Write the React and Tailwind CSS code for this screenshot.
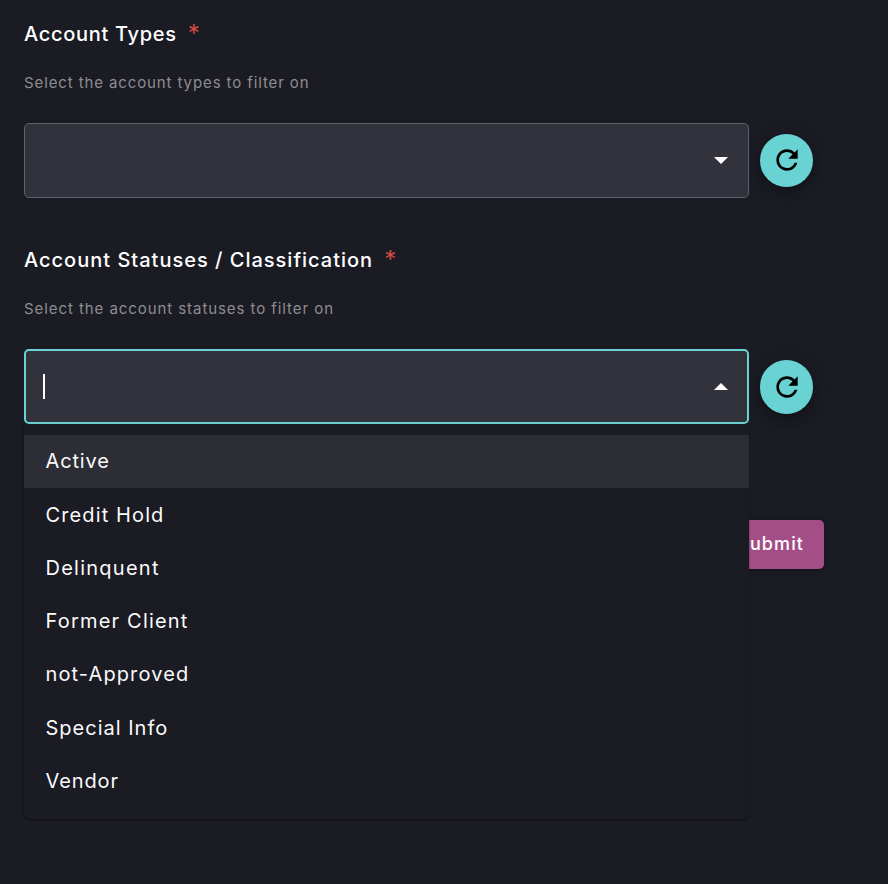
import React from 'react';

const OPTIONS = [
  { label: 'Active', tracking: 'tracking-[0.85px]' },
  { label: 'Credit Hold', tracking: 'tracking-[1.12px]' },
  { label: 'Delinquent', tracking: 'tracking-[1.25px]' },
  { label: 'Former Client', tracking: 'tracking-[1.2px]' },
  { label: 'not-Approved', tracking: 'tracking-[1.12px]' },
  { label: 'Special Info', tracking: 'tracking-[1px]' },
  { label: 'Vendor', tracking: 'tracking-[0.9px]' },
];

function Label({ children, tracking }) {
  return (
    <div className="flex h-7 items-center gap-[11px] whitespace-nowrap text-[20px] leading-7 font-medium text-white">
      <span className={tracking}>{children}</span>
      <span className="text-[24px] font-normal text-[#d1493f]">*</span>
    </div>
  );
}

function Hint({ children, tracking }) {
  return (
    <p className={`mt-[25px] h-5 whitespace-nowrap text-[15px] leading-5 text-[#8d8d91] ${tracking}`}>
      {children}
    </p>
  );
}

function RefreshButton({ className = '' }) {
  return (
    <button
      className={`flex size-[53.33px] shrink-0 items-center justify-center rounded-full bg-[#69d2d3] text-black shadow-[0_4px_7px_-1px_rgba(0,0,0,0.2),0_6px_10px_rgba(0,0,0,0.12),0_1px_20px_rgba(0,0,0,0.08)] ${className}`}
    >
      <svg viewBox="0 0 24 24" className="size-8" fill="currentColor">
        <path d="M17.65 6.35C16.2 4.9 14.21 4 12 4c-4.42 0-7.99 3.58-7.99 8s3.57 8 7.99 8c3.73 0 6.84-2.55 7.73-6h-2.08c-.82 2.33-3.04 4-5.65 4-3.31 0-6-2.69-6-6s2.69-6 6-6c1.66 0 3.14.69 4.22 1.78L13 11h7V4l-2.35 2.35z" />
      </svg>
    </button>
  );
}

function Arrow({ up }) {
  return (
    <svg viewBox="0 0 14 7" className="h-[7px] w-[14px]" fill="white">
      <path d={up ? 'M0 7 7 0l7 7z' : 'M0 0l7 7 7-7z'} />
    </svg>
  );
}

export default function App() {
  return (
    <main className="h-[884px] w-[888px] overflow-hidden bg-[#1b1b24] pt-5 pl-6 font-[Inter,sans-serif]">
      <section>
        <Label tracking="tracking-[0.7px]">Account Types</Label>
        <Hint tracking="tracking-[0.89px]">Select the account types to filter on</Hint>
        <div className="mt-[30px] flex items-center gap-[11px]">
          <div className="flex h-[75px] w-[725px] items-center justify-end rounded-[5px] border border-[#61616b] bg-[#32323d] pr-5">
            <Arrow />
          </div>
          <RefreshButton />
        </div>
      </section>

      <section className="mt-12">
        <Label tracking="tracking-[1px]">Account Statuses / Classification</Label>
        <Hint tracking="tracking-[0.93px]">Select the account statuses to filter on</Hint>
        <div className="mt-[30px] flex items-center gap-[11px]">
          <div className="relative h-[75px] w-[725px]">
            <div className="flex h-full items-center justify-between rounded-[5px] border-2 border-[#69d2d3] bg-[#32323d] pr-[19px] pl-[17px]">
              <span className="h-[25px] w-0.5 bg-white" />
              <Arrow up />
            </div>
            <ul className="absolute top-full left-0 z-10 h-[395px] w-[725px] rounded-b-[5px] bg-[#1b1b24] pt-[10.53px] shadow-[0_1px_2px_rgba(0,0,0,0.5)]">
              {OPTIONS.map((option, index) => (
                <li
                  key={option.label}
                  className={`flex h-[53.33px] items-center pl-[21.5px] text-[20px] text-[#fafafa] ${option.tracking} ${index === 0 ? 'bg-[#2d2d35]' : ''}`}
                >
                  {option.label}
                </li>
              ))}
            </ul>
          </div>
          <RefreshButton className="mt-px" />
        </div>
      </section>

      <div className="mt-24 flex w-[800px] justify-end">
        <button className="h-[49px] rounded-[5px] bg-[#a34e87] pr-5 pb-0.5 pl-[21px] text-[18px] font-medium tracking-[1.1px] text-white shadow-[0_1px_4px_rgba(0,0,0,0.35)]">
          Submit
        </button>
      </div>
    </main>
  );
}
